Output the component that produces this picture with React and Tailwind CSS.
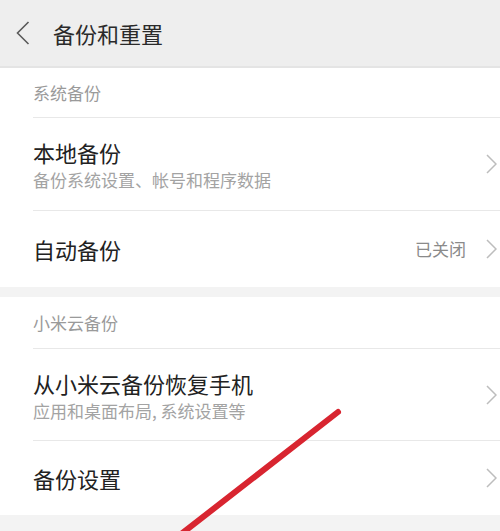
const font = { fontFamily: '"Noto Sans CJK SC", "Noto Sans", sans-serif' };

function Chevron({ left }) {
  // thin chevron as drawn in the MIUI settings list
  return left ? (
    <svg width="14" height="24" viewBox="0 0 14 24" className="ml-[16px]">
      <polyline points="12.5,1 1.5,12 12.5,23" fill="none" stroke="#5a5a5a" strokeWidth="1.6" />
    </svg>
  ) : (
    <svg width="11" height="20" viewBox="0 0 11 20">
      <polyline points="1,1 10,10 1,19" fill="none" stroke="#bdbdbd" strokeWidth="1.5" />
    </svg>
  );
}

function GroupHeader({ title, height }) {
  return (
    <div className={`flex items-center pl-[33px] text-[17px] text-[#9a9a9a] ${height}`}>
      {title}
    </div>
  );
}

function Divider() {
  return <div className="ml-[33px] h-px bg-[#e8e8e8]" />;
}

function Row({ title, subtitle, value, height }) {
  return (
    <div className={`flex items-center pl-[33px] pr-[3px] ${height}`}>
      <div className="flex-1 flex flex-col">
        <div className="text-[22px] leading-[30px] text-[#222]">{title}</div>
        {subtitle && (
          <div className="text-[17px] leading-[22px] text-[#a3a3a3] mt-[2px]">{subtitle}</div>
        )}
      </div>
      {value && <span className="text-[17px] text-[#8a8a8a] mr-[20px]">{value}</span>}
      <Chevron />
    </div>
  );
}

export default function App() {
  return (
    <div className="relative w-[500px] h-[531px] overflow-hidden bg-[#f3f3f3]" style={font}>
      {/* Title bar */}
      <div className="h-[68px] flex items-center bg-[#eeeeee] border-b-2 border-[#e4e4e4]">
        <Chevron left />
        <span className="ml-[23px] text-[22px] text-[#2a2a2a]">备份和重置</span>
      </div>

      {/* 系统备份 */}
      <div className="bg-white">
        <GroupHeader title="系统备份" height="h-[49px]" />
        <Divider />
        <Row title="本地备份" subtitle="备份系统设置、帐号和程序数据" height="h-[92px]" />
        <Divider />
        <Row title="自动备份" value="已关闭" height="h-[76px]" />
      </div>

      <div className="h-[10px]" />

      {/* 小米云备份 */}
      <div className="bg-white">
        <GroupHeader title="小米云备份" height="h-[51px]" />
        <Divider />
        <Row title="从小米云备份恢复手机" subtitle="应用和桌面布局, 系统设置等" height="h-[91px]" />
        <Divider />
        <Row title="备份设置" height="h-[74px]" />
      </div>

      {/* annotation stroke */}
      <svg className="absolute left-0 top-0 pointer-events-none" width="500" height="531">
        <line x1="338" y1="412" x2="176" y2="538" stroke="#d82530" strokeWidth="6" strokeLinecap="round" />
      </svg>
    </div>
  );
}
